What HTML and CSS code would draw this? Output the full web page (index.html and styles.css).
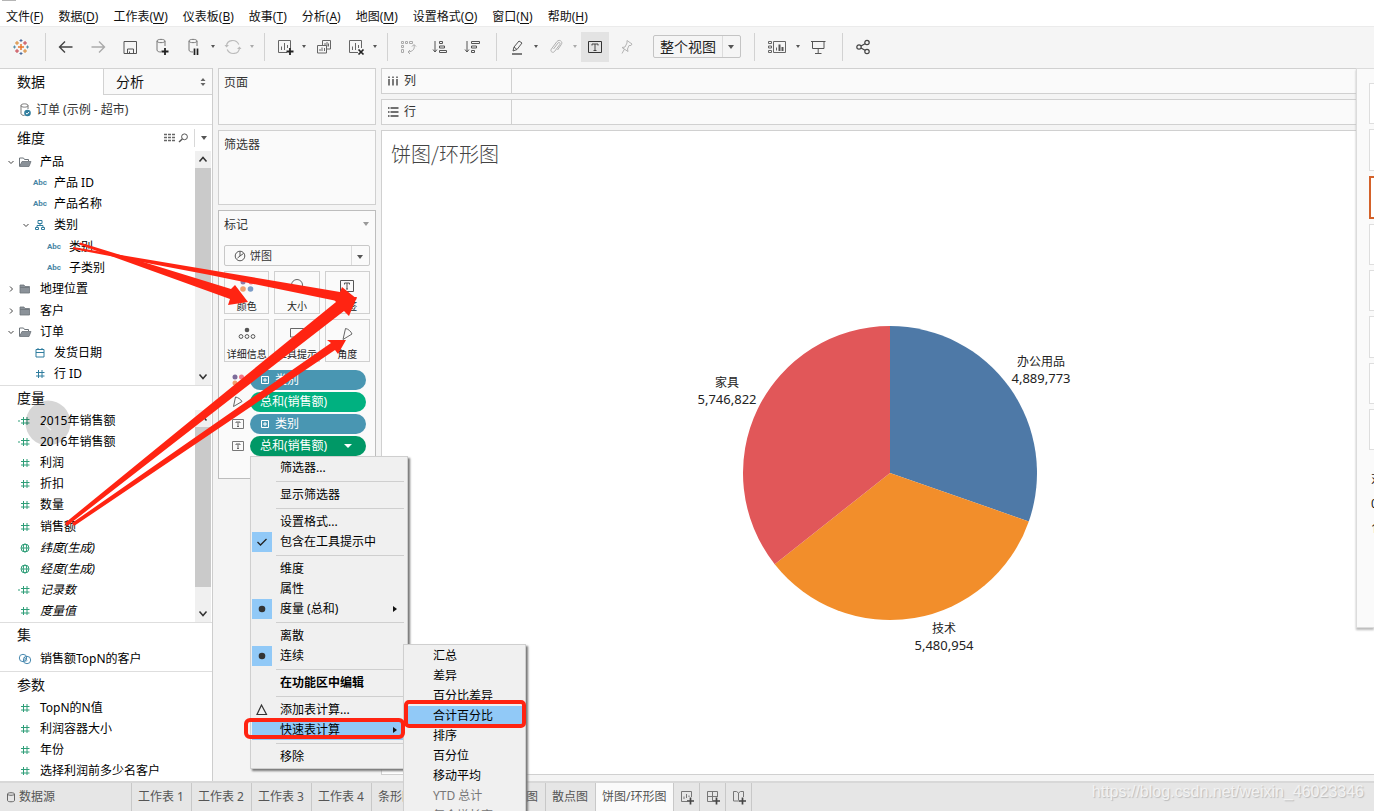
FILE: index.html
```html
<!DOCTYPE html>
<html lang="zh-CN">
<head>
<meta charset="utf-8">
<meta name="viewport" content="width=device-width, initial-scale=1">
<title>饼图/环形图</title>
<link rel="stylesheet" href="styles.css">
</head>
<body>
<svg class="defs" aria-hidden="true">
  <symbol id="i-hash" viewBox="0 0 14 14"><path d="M5.5 3v8M9 3v8M3 5.5h8.5M3 9h8.5" fill="none" stroke="currentColor"/></symbol>
  <symbol id="i-calc" viewBox="0 0 14 14"><path d="M5.5 3v8M9 3v8M3 5.5h8.5M3 9h8.5M0 7h2" fill="none" stroke="currentColor"/></symbol>
  <symbol id="i-globe" viewBox="0 0 14 14"><g fill="none" stroke="currentColor"><circle cx="7" cy="7" r="4"/><ellipse cx="7" cy="7" rx="1.8" ry="4"/><path d="M3 7h8"/></g></symbol>
  <symbol id="i-open" viewBox="0 0 14 14"><path d="M1.5 11V3h4l1 1.5h4V6" fill="none" stroke="#6d747a"/><path d="M1.5 11.5 4 6.5h9l-2 5z" fill="#8b9299" stroke="#6d747a" stroke-width=".8"/></symbol>
  <symbol id="i-folder" viewBox="0 0 14 14"><path d="M2 3h4l1 1.5h4.500V11H2z" fill="#8b9299"/><path d="M2 3h4l1 1.500h4.500V11H2zM2 5.500h9" fill="none" stroke="#6d747a" stroke-width=".8"/></symbol>
  <symbol id="i-tree" viewBox="0 0 14 14"><path d="M5 2.500h4v3H5zM2.500 9.500h3v2h-3zM8.500 9.500h3v2h-3zM7 5.500v2M4 9.500v-2h6v2" fill="none" stroke="currentColor"/></symbol>
  <symbol id="i-date" viewBox="0 0 14 14"><path d="M3 3.500h8v7.500H3zM3 6.500h8M5 2v2M9 2v2" fill="none" stroke="currentColor"/></symbol>
  <symbol id="i-set" viewBox="0 0 14 14"><g fill="none" stroke="currentColor"><circle cx="5" cy="6" r="3.700"/><circle cx="9" cy="8" r="3.700"/><path d="m6 5 3 3.500M5.500 7l2.500 2.500"/></g></symbol>
  <symbol id="i-down" viewBox="0 0 14 14"><path d="m4.500 6 2.500 2.500L9.500 6" fill="none" stroke="#444"/></symbol>
  <symbol id="i-right" viewBox="0 0 14 14"><path d="M6 4.500 8.500 7 6 9.500" fill="none" stroke="#444"/></symbol>
  <symbol id="i-up-lg" viewBox="0 0 14 14"><path d="m3.500 9 3.500-4 3.500 4" fill="none" stroke="#333" stroke-width="1.500"/></symbol>
  <symbol id="i-down-lg" viewBox="0 0 14 14"><path d="m3.500 5 3.500 4 3.500-4" fill="none" stroke="#333" stroke-width="1.500"/></symbol>
  <symbol id="i-angle" viewBox="0 0 14 14"><path d="M4.500 2 2.500 11.500 11 6.500C9.500 4 7 2.500 4.500 2z" fill="none" stroke="#666"/></symbol>
  <symbol id="i-label" viewBox="0 0 16 14"><path d="M2.500 2.500h11v9h-11z" fill="none" stroke="#777"/><path d="M6 6V5h4v1M8 5v4.500M7 9.500h2" fill="none" stroke="#666"/></symbol>
  <symbol id="i-cyl" viewBox="0 0 20 20"><path d="M5 4v9c0 1.500 2 2 4 2M5 4c0-2.200 8-2.200 8 0s-8 2.200-8 0M13 4v5" fill="none" stroke="#777"/></symbol>
  <symbol id="i-chart" viewBox="0 0 20 20"><path d="M12 15.500H3.500v-12h12V11M6.500 13V9.500M9.500 13V6M12.500 11V8" fill="none" stroke="#666"/></symbol>
</svg>

<nav class="menubar" aria-label="主菜单">
  <button>文件(<u>F</u>)</button><button>数据(<u>D</u>)</button><button>工作表(<u>W</u>)</button><button>仪表板(<u>B</u>)</button><button>故事(<u>T</u>)</button><button>分析(<u>A</u>)</button><button>地图(<u>M</u>)</button><button>设置格式(<u>O</u>)</button><button>窗口(<u>N</u>)</button><button>帮助(<u>H</u>)</button>
</nav>

<div class="toolbar" role="toolbar" aria-label="工具栏">
  <button class="tool" aria-label="起始页"><svg viewBox="0 0 20 20"><path d="M10 7v6M7 10h6" stroke="#e8762c" stroke-width="1.500"/><path d="M6 4v4M4 6h4M14 12v4M12 14h4" stroke="#d9862e"/><path d="M14 4v4M12 6h4M6 12v4M4 14h4" stroke="#c6414b"/><path d="M10 2v3M8.500 3.500h3M10 15v3M8.500 16.500h3" stroke="#4e6b9c"/><path d="M3.500 8.500v3M2 10h3M16.500 8.500v3M15 10h3" stroke="#5a8fa8"/></svg></button>
  <span class="sep"></span>
  <button class="tool" aria-label="撤消"><svg viewBox="0 0 20 20"><path d="M16.500 10h-13M9 4.500 3.500 10 9 15.500" fill="none" stroke="#444" stroke-width="1.400"/></svg></button>
  <button class="tool" aria-label="重做"><svg viewBox="0 0 20 20"><path d="M3.500 10h13M11 4.500l5.500 5.500-5.500 5.500" fill="none" stroke="#aaa" stroke-width="1.400"/></svg></button>
  <button class="tool" aria-label="保存"><svg viewBox="0 0 20 20"><path d="M4 4.500h12.500v12H4zM7.500 16v-4h6v4M9.500 16v-1.500" fill="none" stroke="#555"/></svg></button>
  <button class="tool" aria-label="新建数据源"><svg viewBox="0 0 20 20"><use href="#i-cyl"/><path d="M13 11v7M9.500 14.500h7" stroke="#222" stroke-width="1.800"/></svg></button>
  <button class="tool" aria-label="暂停自动更新"><svg viewBox="0 0 20 20"><use href="#i-cyl"/><path d="M10.500 11.500V18M13.500 11.500V18" stroke="#222" stroke-width="1.700"/></svg></button>
  <button class="caret" aria-label="更新选项"></button>
  <button class="tool" aria-label="运行更新"><svg viewBox="0 0 20 20"><path d="M3.500 9C4 2.500 13 1.500 15.800 7.500M16.500 11C16 17.500 7 18.500 4.200 12.500" fill="none" stroke="#bbb" stroke-width="1.200"/><path d="m1.500 8 2 2.500L6 8zM14 12l2.500-2.500L18.500 12z" fill="#bbb"/></svg></button>
  <button class="caret dim" aria-label="运行选项"></button>
  <span class="sep"></span>
  <button class="tool" aria-label="新建工作表"><svg viewBox="0 0 20 20"><use href="#i-chart"/><path d="M15 11v7M11.500 14.500h7" stroke="#222" stroke-width="1.800"/></svg></button>
  <button class="caret" aria-label="新建选项"></button>
  <button class="tool" aria-label="复制工作表"><svg viewBox="0 0 20 20"><path d="M8.500 9V3.500h8V12h-4M3.500 8.500h9v7.500h-9zM6 14v-2M8 14v-3.500M10.500 14v-3M11 8V6M13 9.500V5M14.500 9.500V6.500" fill="none" stroke="#666"/></svg></button>
  <button class="tool" aria-label="清除工作表"><svg viewBox="0 0 20 20"><use href="#i-chart"/><path d="m12.500 12.500 5 5M17.500 12.500l-5 5" stroke="#222" stroke-width="1.700"/></svg></button>
  <button class="caret" aria-label="清除选项"></button>
  <span class="sep"></span>
  <button class="tool" aria-label="交换行和列"><svg viewBox="0 0 20 20"><path d="M3.500 4.500h2v2h-2zM7.500 4.500h2v2h-2zM11.500 4.500h3v2h-3zM3.500 8.500h2v2h-2zM3.500 12.500h2v3h-2zM16 8c1 4-1 6.500-6 7M14 9.500l2-2 2 2M12 13l-2 2 2 2" fill="none" stroke="#aaa"/></svg></button>
  <button class="tool" aria-label="升序排序"><svg viewBox="0 0 20 20"><path d="M5 4v11M3 12.500l2 2.500 2-2.500M9.500 4.500h3v2h-3zM9.500 9h5v2h-5zM9.500 13.500h7v2h-7z" fill="none" stroke="#555"/></svg></button>
  <button class="tool" aria-label="降序排序"><svg viewBox="0 0 20 20"><path d="M5 4v11M3 12.500l2 2.500 2-2.500M9.500 4.500h8v2h-8zM9.500 9h5v2h-5zM9.500 13.500h3v2h-3z" fill="none" stroke="#555"/></svg></button>
  <span class="sep"></span>
  <button class="tool" aria-label="突出显示"><svg viewBox="0 0 20 20"><path d="m6 14 1-4 5-6 3 2-5 6.500zM7 10l3 2.500" fill="none" stroke="#555"/><path d="M5 17h10" stroke="#555" stroke-width="1.500"/></svg></button>
  <button class="caret" aria-label="突出显示选项"></button>
  <button class="tool" aria-label="组成员"><svg viewBox="0 0 20 20"><path d="m7.500 12 4.500-6c1-1.300 2.800 0 1.800 1.500L8.500 14.500c-1.500 2-4.700 0-3.200-2.300l5.500-7.500c2.200-3 6.500-.2 4.500 2.800l-3.800 5.500" fill="none" stroke="#b0b0b0"/></svg></button>
  <button class="caret dim" aria-label="组选项"></button>
  <button class="tool active" aria-label="显示标记标签" aria-pressed="true"><svg viewBox="0 0 20 20"><path d="M3.500 4.500h13v11h-13z" fill="none" stroke="#333"/><path d="M7 8.500V7h6v1.500M10 7v6.500M8.500 13.500h3" fill="none" stroke="#444"/></svg></button>
  <button class="tool" aria-label="固定轴"><svg viewBox="0 0 20 20"><path d="m10 3.500 5 3.500-1 1.500h-2L10.500 12l.5 2.500-6-4 3-.5 2-4zM7.500 12 5 16.500" fill="none" stroke="#b4b4b4"/></svg></button>
  <label class="fit"><select aria-label="适合"><option>整个视图</option></select></label>
  <span class="sep far"></span>
  <button class="tool wide" aria-label="显示/隐藏功能区"><svg viewBox="0 0 20 20"><path d="M1.500 4.500h3v2h-3zM1.500 9h3v2h-3zM1.500 13.500h3v2h-3zM6.500 4.500h12v11h-12zM9.500 13.500v-3" fill="none" stroke="#666"/><path d="M12.500 14V7.500M15.500 14V10" stroke="#555" stroke-width="2"/></svg></button>
  <button class="caret" aria-label="功能区选项"></button>
  <button class="tool" aria-label="演示模式"><svg viewBox="0 0 20 20"><path d="M3 4.500h14.500M4.500 5v6.500h11.500V5M10.200 11.500V16M7 16.500h6.500" fill="none" stroke="#555"/></svg></button>
  <span class="sep"></span>
  <button class="tool" aria-label="共享"><svg viewBox="0 0 20 20"><g fill="none" stroke="#444" stroke-width="1.200"><circle cx="6" cy="10" r="2.200"/><circle cx="14" cy="5.500" r="2.200"/><circle cx="14" cy="14.500" r="2.200"/><path d="m8 9 4-2.300M8 11l4 2.300"/></g></svg></button>
</div>

<main class="workspace">
  <aside class="data-pane">
    <div class="pane-tabs"><button class="pane-tab on">数据</button><button class="pane-tab">分析<svg viewBox="0 0 14 14"><path d="m4.500 6 2.500-3 2.500 3zM4.500 8 7 11l2.500-3z" fill="#666"/></svg></button></div>
    <div class="source"><svg viewBox="0 0 16 16"><path d="M3 3.500v8c0 1 1.500 2 3.500 2M3 3.500c0-2.200 7-2.200 7 0s-7 2.200-7 0M10 3.500V7" fill="none" stroke="#777"/><circle cx="9.500" cy="11" r="3.300" fill="#2f7d9e"/><path d="m7.900 11 1.200 1.200 2-2.300" fill="none" stroke="#fff"/></svg>订单 (示例 - 超市)</div>

    <section class="fields dims">
      <header><h2>维度</h2>
        <svg viewBox="0 0 14 14"><path d="M2 3.500h3M6 3.500h3M10 3.500h3M2 6.500h3M6 6.500h3M10 6.500h3M2 9.500h3M6 9.500h3M10 9.500h3" stroke="#666" stroke-width="1.500"/></svg>
        <svg viewBox="0 0 14 14"><path d="M6.300 8 3 11" stroke="#555" stroke-width="1.500"/><circle cx="8.500" cy="5.800" r="2.900" fill="none" stroke="#555"/></svg>
        <button class="more" aria-label="维度菜单"></button></header>
      <div class="scroll">
        <ul>
          <li><svg><use href="#i-down"/></svg><svg><use href="#i-open"/></svg><span>产品</span></li>
          <li class="l1"><i></i><b>Abc</b><span>产品 ID</span></li>
          <li class="l1"><i></i><b>Abc</b><span>产品名称</span></li>
          <li class="l1"><svg><use href="#i-down"/></svg><svg><use href="#i-tree"/></svg><span>类别</span></li>
          <li class="l2"><i></i><b>Abc</b><span>类别</span></li>
          <li class="l2"><i></i><b>Abc</b><span>子类别</span></li>
          <li><svg><use href="#i-right"/></svg><svg><use href="#i-folder"/></svg><span>地理位置</span></li>
          <li><svg><use href="#i-right"/></svg><svg><use href="#i-folder"/></svg><span>客户</span></li>
          <li><svg><use href="#i-down"/></svg><svg><use href="#i-open"/></svg><span>订单</span></li>
          <li class="l1"><i></i><svg><use href="#i-date"/></svg><span>发货日期</span></li>
          <li class="l1"><i></i><svg><use href="#i-hash"/></svg><span>行 ID</span></li>
        </ul>
        <div class="bar"><svg><use href="#i-up-lg"/></svg><span class="thumb"></span><svg><use href="#i-down-lg"/></svg></div>
      </div>
    </section>

    <section class="fields meas">
      <header><h2>度量</h2></header>
      <div class="scroll">
        <ul>
          <li><i></i><svg><use href="#i-calc"/></svg><span>2015年销售额</span></li>
          <li><i></i><svg><use href="#i-calc"/></svg><span>2016年销售额</span></li>
          <li><i></i><svg><use href="#i-hash"/></svg><span>利润</span></li>
          <li><i></i><svg><use href="#i-hash"/></svg><span>折扣</span></li>
          <li><i></i><svg><use href="#i-hash"/></svg><span>数量</span></li>
          <li><i></i><svg><use href="#i-hash"/></svg><span>销售额</span></li>
          <li class="gen"><i></i><svg><use href="#i-globe"/></svg><span>纬度(生成)</span></li>
          <li class="gen"><i></i><svg><use href="#i-globe"/></svg><span>经度(生成)</span></li>
          <li class="gen"><i></i><svg><use href="#i-calc"/></svg><span>记录数</span></li>
          <li class="gen"><i></i><svg><use href="#i-hash"/></svg><span>度量值</span></li>
        </ul>
        <div class="bar"><svg><use href="#i-up-lg"/></svg><span class="thumb long"></span><svg><use href="#i-down-lg"/></svg></div>
      </div>
    </section>

    <section class="fields sets">
      <header><h2>集</h2></header>
      <ul><li><i></i><svg><use href="#i-set"/></svg><span>销售额TopN的客户</span></li></ul>
    </section>

    <section class="fields params">
      <header><h2>参数</h2></header>
      <ul>
        <li><i></i><svg><use href="#i-hash"/></svg><span>TopN的N值</span></li>
        <li><i></i><svg><use href="#i-hash"/></svg><span>利润容器大小</span></li>
        <li><i></i><svg><use href="#i-hash"/></svg><span>年份</span></li>
        <li><i></i><svg><use href="#i-hash"/></svg><span>选择利润前多少名客户</span></li>
      </ul>
    </section>
  </aside>

  <div class="cards">
    <section class="card pages"><h3>页面</h3></section>
    <section class="card filters"><h3>筛选器</h3></section>
    <section class="card marks">
      <header><h3>标记</h3><button class="more pale" aria-label="标记菜单"></button></header>
      <label class="mark-type"><svg viewBox="0 0 14 14"><g fill="none" stroke="#555"><circle cx="7" cy="7" r="4.800"/><path d="M7 2.500V7l3.500-2.500M7 7 4.500 9"/></g></svg><select aria-label="标记类型"><option>饼图</option></select></label>
      <div class="mark-grid">
        <button><svg viewBox="0 0 20 16"><circle cx="6" cy="4" r="2.500" fill="#8f7ba8"/><circle cx="14" cy="4" r="2.500" fill="#f2788a"/><circle cx="6" cy="11" r="2.800" fill="#f0a070"/><circle cx="13.500" cy="11" r="2.800" fill="#7a9cc8"/></svg>颜色</button>
        <button><svg viewBox="0 0 20 16"><circle cx="10" cy="7" r="5.500" fill="none" stroke="#666"/></svg>大小</button>
        <button><svg viewBox="0 0 20 16"><path d="M3.500 2.500h13v11h-13z" fill="none" stroke="#555"/><path d="M7.500 6.500V5h5v1.500M10 5v6M9 11h2" fill="none" stroke="#555"/></svg>标签</button>
        <button><svg viewBox="0 0 20 16"><circle cx="10" cy="4" r="2.300" fill="#555"/><g fill="none" stroke="#555"><circle cx="4" cy="10.500" r="1.900"/><circle cx="10" cy="10.500" r="1.900"/><circle cx="16" cy="10.500" r="1.900"/></g></svg>详细信息</button>
        <button><svg viewBox="0 0 20 16"><path d="M3.500 2.500h13v8.500h-3l-2 2-2-2h-6z" fill="none" stroke="#666"/></svg>工具提示</button>
        <button><svg viewBox="0 0 20 16"><path d="M8.500 2.500 6 13.500l9-5.500C14 5.500 11.500 3 8.500 2.500z" fill="none" stroke="#666"/></svg>角度</button>
      </div>
      <ul class="pills">
        <li><svg viewBox="0 0 16 14"><circle cx="5" cy="4" r="2.500" fill="#7d6b9a"/><circle cx="11.500" cy="4" r="2.500" fill="#f2788a"/><circle cx="5" cy="10" r="2.500" fill="#f0a070"/><circle cx="11.500" cy="10" r="2.500" fill="#7a9cc8"/></svg><button class="pill blue"><svg viewBox="0 0 10 10"><path d="M1.500 1.500h7v7h-7zM5 3v4M3 5h4" fill="none" stroke="#fff"/></svg>类别</button></li>
        <li><svg><use href="#i-angle"/></svg><button class="pill green">总和(销售额)</button></li>
        <li><svg><use href="#i-label"/></svg><button class="pill blue"><svg viewBox="0 0 10 10"><path d="M1.500 1.500h7v7h-7zM5 3v4M3 5h4" fill="none" stroke="#fff"/></svg>类别</button></li>
        <li class="anchor"><svg><use href="#i-label"/></svg><button class="pill green open">总和(销售额)<svg class="drop" viewBox="0 0 10 10"><path d="M1 3h8L5 7z" fill="#fff"/></svg></button>
          <div class="menu" role="menu">
            <button role="menuitem">筛选器...</button><hr>
            <button role="menuitem">显示筛选器</button><hr>
            <button role="menuitem">设置格式...</button>
            <button role="menuitem"><svg class="tick" viewBox="0 0 20 20"><path d="m5.500 10 3 3 6-6" fill="none" stroke="#222" stroke-width="1.300"/></svg>包含在工具提示中</button><hr>
            <button role="menuitem">维度</button>
            <button role="menuitem">属性</button>
            <button role="menuitem" class="sub"><svg class="tick" viewBox="0 0 20 20"><circle cx="10" cy="10" r="3.300" fill="#333"/></svg>度量 (总和)</button><hr>
            <button role="menuitem">离散</button>
            <button role="menuitem"><svg class="tick" viewBox="0 0 20 20"><circle cx="10" cy="10" r="3.300" fill="#333"/></svg>连续</button><hr>
            <button role="menuitem" class="strong">在功能区中编辑</button><hr>
            <button role="menuitem"><svg class="mark" viewBox="0 0 20 20"><path d="M9.500 5 5 14.500h9.500z" fill="none" stroke="#333" stroke-width="1.200"/></svg>添加表计算...</button>
            <div class="has-sub"><button role="menuitem" class="sub hot">快速表计算</button>
              <div class="menu submenu" role="menu">
                <button role="menuitem">汇总</button><button role="menuitem">差异</button><button role="menuitem">百分比差异</button><button role="menuitem" class="hot">合计百分比</button><button role="menuitem">排序</button><button role="menuitem">百分位</button><button role="menuitem">移动平均</button><button role="menuitem" disabled>YTD 总计</button><button role="menuitem" disabled>复合增长率</button>
              </div>
            </div><hr>
            <button role="menuitem">移除</button>
          </div>
        </li>
      </ul>
    </section>
  </div>

  <div class="view">
    <div class="shelf"><div class="shelf-name"><svg viewBox="0 0 14 14"><path d="M3 5v6.500M7 5v6.500M11 5v6.500M3 2.500V4M7 2.500V4M11 2.500V4" stroke="#444" stroke-width="1.400"/></svg>列</div></div>
    <div class="shelf"><div class="shelf-name"><svg viewBox="0 0 14 14"><path d="M4.500 3h8M4.500 7h8M4.500 11h8M2 3h1.500M2 7h1.500M2 11h1.500" stroke="#444" stroke-width="1.400"/></svg>行</div></div>
    <section class="viz">
      <h1>饼图/环形图</h1>
      <svg class="pie" viewBox="-200 -180 400 360" role="img" aria-label="各类别销售额饼图">
        <path d="M0 0V-147A147 147 0 0 1 138.800 48.400z" fill="#4e79a7"/>
        <path d="M0 0 138.800 48.400A147 147 0 0 1-115.300 91.200z" fill="#f28e2b"/>
        <path d="M0 0-115.300 91.200A147 147 0 0 1 0-147z" fill="#e15759"/>
        <text class="cat" x="151" y="-107">办公用品</text><text x="151" y="-90">4,889,773</text>
        <text class="cat" x="-163" y="-86">家具</text><text x="-163" y="-69">5,746,822</text>
        <text class="cat" x="54" y="160">技术</text><text x="54" y="177">5,480,954</text>
      </svg>
    </section>
  </div>

  <aside class="show-me" aria-label="智能显示">
    <div class="thumbs"><button aria-label="图表 1"></button><button aria-label="图表 2"></button><button class="pick" aria-label="饼图"></button><button aria-label="图表 4"></button><button aria-label="图表 5"></button><button aria-label="图表 6"></button><button aria-label="图表 7"></button><button aria-label="图表 8"></button></div>
    <p>对</p><p>0</p><p>1</p>
  </aside>
</main>

<footer class="sheets">
  <button class="data-src"><svg viewBox="0 0 14 14"><path d="M3.500 4v6.500c0 1.700 7 1.700 7 0V4M3.500 4c0-1.700 7-1.700 7 0s-7 1.700-7 0" fill="none" stroke="#666"/></svg>数据源</button>
  <button>工作表 1</button><button>工作表 2</button><button>工作表 3</button><button>工作表 4</button><button>条形图</button><button class="long">图</button><button>散点图</button><button class="on">饼图/环形图</button>
  <button class="new" aria-label="新建工作表"><svg viewBox="0 0 20 20"><path d="M10 14.500H4.500v-10h10V10M7 12V9.500M9.500 11V7M12 10V8.500" fill="none" stroke="#777"/><path d="M13.500 10.500v7M10 14h7" stroke="#444" stroke-width="1.700"/></svg></button>
  <button class="new" aria-label="新建仪表板"><svg viewBox="0 0 20 20"><path d="M10 14.500H4.500v-10h10V10M4.500 9.500h10M9.500 4.500v10" fill="none" stroke="#777"/><path d="M13.500 10.500v7M10 14h7" stroke="#444" stroke-width="1.700"/></svg></button>
  <button class="new" aria-label="新建故事"><svg viewBox="0 0 20 20"><path d="M10 14.500 9.500 14H4.500V4.500h3l2 1.500 2-1.500h3V10M9.500 6v7.500" fill="none" stroke="#777"/><path d="M13.500 10.500v7M10 14h7" stroke="#444" stroke-width="1.700"/></svg></button>
  <span class="watermark">https://blog.csdn.net/weixin_46023346</span>
</footer>

<span class="handle"></span>
<svg class="notes" width="540" height="800" viewBox="0 0 540 800" aria-hidden="true">
  <circle cx="48" cy="423" r="22.500" fill="#000" fill-opacity=".16"/><path d="m45 424 6 6" stroke="#eee" stroke-width="1.500"/>
  <g fill="#ff2412">
    <path d="M80 242.500 231 289l4-4 13 17-20 3 2-6L79 244.500z"/>
    <path d="M73 247 210 270l130 22 2-5 15 12-21 8 1-6-127-26-137-26z"/>
    <path d="m65 523 271-221-4-5 25 0-8 19-5-5L67 526z"/>
    <path d="m72 523 259-180-4-3h19l-8 14-3-4L74 526z"/>
  </g>
  <g fill="none" stroke="#ff2412" stroke-width="4"><rect x="246" y="720" width="157" height="17" rx="4"/><rect x="406" y="702" width="118" height="24" rx="3"/></g>
</svg>
</body>
</html>
```
FILE: styles.css
```css
* { box-sizing: border-box; }
body {
  margin: 0;
  height: 100vh;
  display: flex;
  flex-direction: column;
  overflow: hidden;
  position: relative;
  background: #f4f4f4;
  color: #111;
  font: 12px/20px "Noto Sans", "Noto Sans CJK SC", sans-serif;
}
button, select {
  font: inherit;
  color: inherit;
  border: 0;
  background: none;
  padding: 0;
  margin: 0;
}
select { appearance: none; }
h1, h2, h3, p, ul { margin: 0; padding: 0; font-weight: 400; }
ul { list-style: none; }
svg { flex: none; display: block; }
.defs { position: absolute; width: 0; height: 0; }

.menubar {
  display: flex;
  gap: 15px;
  height: 27px;
  padding: 7px 6px 0;
  background: #fff;
  border-bottom: 1px solid #ebebeb;
}
.menubar button { height: 19px; }
.menubar u { text-underline-offset: 2px; }

.toolbar {
  display: flex;
  align-items: center;
  gap: 4px;
  height: 41px;
  padding: 0 0 2px 7px;
  background: #f5f5f5;
}
.tool { width: 28px; height: 30px; display: grid; place-items: center; }
.tool svg { width: 20px; height: 20px; }
.tool.wide { width: 32px; }
.tool.active { background: #e3e3e3; }
.sep { width: 1px; height: 28px; margin: 0 2px 0 6px; background: #d2d2d2; }
.sep.far { margin: 0 2px 0 9px; }
.caret { width: 5px; height: 20px; margin-left: -2px; display: grid; place-items: center; }
.caret::after, .more::after {
  content: "";
  border: 2px solid transparent;
  border-top: 3px solid #555;
  border-bottom: 0;
}
.more::after { border-width: 4px 3px 0; }
.caret.dim::after { border-top-color: #aaa; }
.fit { position: relative; width: 88px; height: 23px; margin-left: 8px; border: 1px solid #c4c4c4; border-radius: 2px; }
.fit select { width: 100%; height: 100%; padding-left: 6px; font-size: 14px; color: #222; }
.fit::after, .mark-type::after {
  content: "";
  position: absolute;
  right: 6px;
  top: 9px;
  border: 3px solid transparent;
  border-top: 4px solid #555;
  border-bottom: 0;
}
.fit::before, .mark-type::before {
  content: "";
  position: absolute;
  right: 17px;
  top: 0;
  bottom: 0;
  border-left: 1px solid #dcdcdc;
}

.workspace { flex: 1; min-height: 0; display: flex; gap: 5px; position: relative; padding-bottom: 6px; }

.data-pane {
  width: 213px;
  margin-bottom: -6px;
  background: #fff;
  border-right: 1px solid #cdcdcd;
  display: flex;
  flex-direction: column;
  overflow: hidden;
}
.pane-tabs { display: flex; height: 27px; font-size: 14px; flex: none; }
.pane-tab { flex: 1; display: flex; align-items: center; padding-left: 12px; background: #f9f9f9; border: solid #d2d2d2; border-width: 1px 0 1px 1px; }
.pane-tab.on { flex: none; width: 103px; padding-left: 17px; background: #fff; border-width: 1px 0 0; }
.pane-tab svg { width: 14px; height: 14px; margin-left: auto; margin-right: 2px; }
.source { height: 29px; display: flex; align-items: center; padding-left: 18px; gap: 2px; color: #333; flex: none; }
.source svg { width: 16px; height: 16px; }
.fields { border-top: 1px solid #dedede; flex: none; display: flex; flex-direction: column; }
.fields header { display: flex; align-items: center; height: 26px; padding-left: 17px; flex: none; }
.fields header svg { width: 14px; height: 14px; }
.fields h2 { font-size: 14px; line-height: 24px; flex: 1; }
.more { width: 18px; height: 18px; margin-left: 4px; display: grid; place-items: center; border-left: 1px solid #d8d8d8; }
.more.pale { border: 0; }
.more.pale::after { border-top-color: #999; }
.fields ul { flex: 1; display: grid; grid-auto-rows: 1fr; }
.fields li { display: flex; align-items: center; padding-left: 4px; white-space: nowrap; }
.fields li svg, .fields li i { width: 14px; height: 14px; flex: none; }
.fields li span { margin-left: 8px; color: #000; }
.fields li b { width: 18px; margin: 0 -2px; font: 700 8px/14px Roboto, sans-serif; color: #4a86a5; text-align: center; }
.fields li.l1 { padding-left: 19px; }
.fields li.l1 span { margin-left: 7px; }
.fields li.l2 { padding-left: 33px; }
.dims { height: 261px; color: #2f7d9e; }
.dims h2, .meas h2, .sets h2, .params h2 { color: #111; }
.meas { height: 237px; color: #2e9e78; }
.meas header { height: 24px; }
.sets { height: 49px; color: #4a8ab0; }
.sets header { height: 24px; }
.params { flex: 1; color: #2e9e78; }
.params header { height: 25px; }
.fields .gen { font-style: italic; }
.scroll { flex: 1; display: flex; min-height: 0; }
.bar { width: 16px; margin-right: 1px; background: #f0f0f0; display: flex; flex-direction: column; align-items: center; }
.bar svg { width: 14px; height: 17px; }
.bar svg:last-child { margin-top: auto; }
.thumb { width: 16px; height: 115px; background: #cacaca; }
.thumb.long { height: 160px; }

.cards { width: 158px; display: flex; flex-direction: column; gap: 5px; }
.card { background: #fafafa; border: 1px solid #d0d0d0; padding: 4px 5px; color: #333; flex: none; }
.card h3 { font-size: 12px; line-height: 20px; }
.pages { height: 57px; }
.filters { height: 75px; }
.marks { height: 269px; border-color: #bdbdbd; }
.marks header { display: flex; justify-content: space-between; height: 30px; margin-right: -5px; }
.mark-type { position: relative; display: flex; align-items: center; height: 21px; padding-left: 8px; border: 1px solid #c8c8c8; border-radius: 2px; font-size: 11px; }
.mark-type svg { width: 14px; height: 14px; }
.mark-type select { flex: 1; padding-left: 3px; line-height: 18px; }
.mark-grid { display: grid; grid-template-columns: repeat(3, 1fr); gap: 5px; margin: 5px 0 8px; }
.mark-grid button { height: 43px; padding-top: 5px; display: flex; flex-direction: column; align-items: center; gap: 5px; border: 1px solid #d0d0d0; font-size: 10px; line-height: 12px; color: #222; white-space: nowrap; }
.mark-grid svg { width: 20px; height: 18px; }
.pills { display: grid; gap: 2px; }
.pills li { display: flex; align-items: center; padding-left: 6px; gap: 4px; }
.pills li > svg { width: 16px; height: 14px; }
.pill { width: 116px; height: 20px; padding-left: 10px; border-radius: 10px; color: #fff; display: flex; align-items: center; }
.pill svg { width: 10px; height: 10px; margin-right: 5px; }
.pill.blue { background: #4996b2; }
.pill.green { background: #00b180; }
.pill.open { background: #009866; }
.pill .drop { margin: 0 13px 0 auto; }
.anchor { position: relative; }

.menu {
  position: absolute;
  z-index: 2;
  top: 100%;
  left: 26px;
  width: 158px;
  padding: 1px;
  background: #f0f0f0;
  border: 1px solid #cfcfcf;
  box-shadow: 2px 2px 2px #777;
  color: #000;
}
.menu button { position: relative; display: flex; align-items: center; width: 100%; height: 20px; padding-left: 28px; white-space: nowrap; }
.menu hr { height: 1px; margin: 3px 2px 3px 24px; border: 0; background: #cfcfcf; }
.menu .tick, .menu .mark { width: 20px; height: 20px; margin: 0 8px 0 -28px; }
.menu .tick { background: #91c9f7; }
.menu .strong { font-weight: 700; }
.menu .hot { background: #91c9f7; }
.menu .sub::after { content: ""; position: absolute; right: 9px; top: 7px; border: 3px solid transparent; border-left: 4px solid #111; border-right: 0; }
.has-sub { position: relative; }
.submenu { top: -76px; left: 151px; width: 123px; height: 179px; display: grid; grid-auto-rows: 1fr; }
.submenu button { height: auto; }
.menu button:disabled { color: #777; }

.view { flex: 1; min-width: 0; display: flex; flex-direction: column; gap: 5px; }
.shelf { height: 26px; display: flex; background: #fafafa; border: 1px solid #d0d0d0; border-right: 0; flex: none; }
.shelf-name { width: 130px; padding-left: 4px; display: flex; align-items: center; gap: 4px; border-right: 1px solid #d0d0d0; color: #333; }
.shelf-name svg { width: 14px; height: 14px; }
.viz { flex: 1; min-height: 0; display: flex; flex-direction: column; background: #fff; border: 1px solid #d0d0d0; border-right: 0; }
.viz h1 { padding: 8px 9px 0; height: 40px; font: 300 20px/30px "Noto Sans CJK SC", sans-serif; color: #444; }
.pie { width: 400px; height: 360px; margin: auto; transform: translateX(12px); }
.pie text { font-size: 13px; text-anchor: middle; fill: #222; }
.pie .cat { font-size: 12px; }

.show-me {
  position: absolute;
  top: 0;
  right: 0;
  width: 18px;
  height: 560px;
  padding: 14px 0 0 12px;
  overflow: hidden;
  background: #fafafa;
  border: solid #dcdcdc;
  border-width: 1px 0 1px 1px;
  box-shadow: 0 2px 2px #bbb;
}
.thumbs { width: 42px; height: 367px; margin-bottom: 16px; display: grid; gap: 5px; }
.thumbs button { background: #fff; border: 1px solid #dedede; }
.thumbs .pick { border: 2px solid #d4622a; }
.show-me p { padding-left: 2px; line-height: 25px; }

.sheets { position: relative; display: flex; height: 30px; flex: none; border-top: 2px solid #d8d8d8; background: #e6e6e6; color: #555; }
.sheets button { display: flex; align-items: center; padding: 0 7px 0 6px; border-right: 1px solid #c8c8c8; white-space: nowrap; }
.sheets .data-src { width: 132px; padding-left: 4px; gap: 1px; }
.sheets .data-src svg { width: 14px; height: 14px; }
.sheets .long { width: 124px; justify-content: flex-end; }
.sheets .on { background: #fafafa; }
.sheets .new { width: 26px; padding: 0 3px; }
.sheets .new svg { width: 20px; height: 20px; }
.watermark { margin-left: auto; padding-right: 10px; font: 16px/18px "Liberation Sans", sans-serif; color: #f2f2f2; text-shadow: 1px 1px 1px #bbb; }

.handle { position: absolute; top: 0; left: 2px; width: 14px; height: 1px; background: #b5b5b5; }
.notes { position: absolute; top: 0; left: 0; z-index: 3; pointer-events: none; }
```
